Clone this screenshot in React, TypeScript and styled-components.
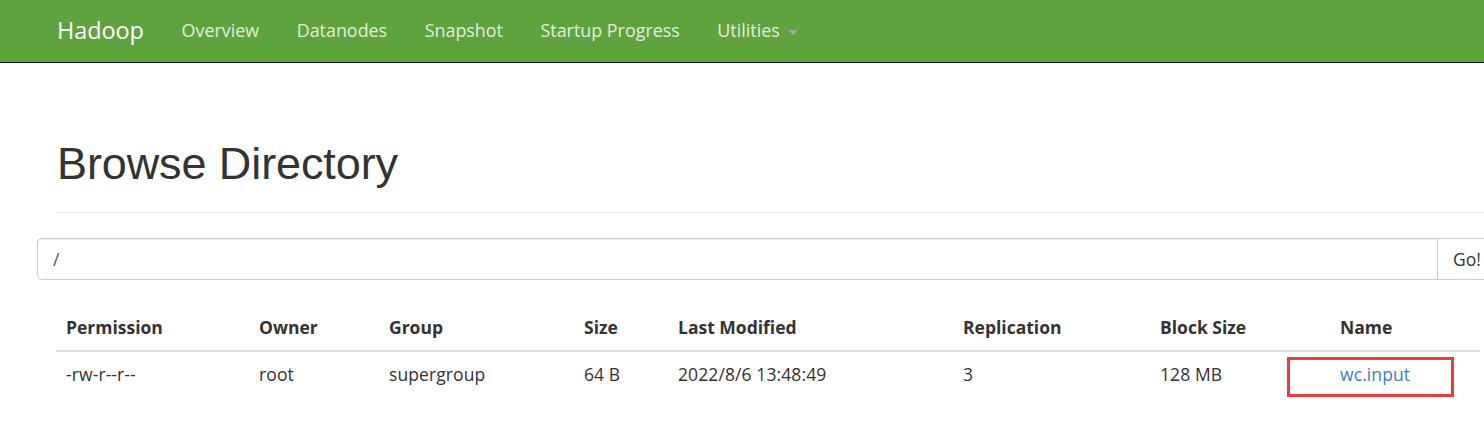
import React from 'react';
import styled, { createGlobalStyle } from 'styled-components';

const GlobalStyle = createGlobalStyle`
  html, body {
    margin: 0;
    padding: 0;
    background: #fff;
    overflow: hidden;
  }
  body {
    font-family: 'Open Sans', 'Noto Sans', sans-serif;
    font-size: 17.5px;
    line-height: 1.42857;
    color: #333;
  }
  * {
    box-sizing: border-box;
  }
`;

const Navbar = styled.nav`
  height: 63px;
  background: #5fa33e;
  border-bottom: 1px solid #111;
  display: flex;
  align-items: center;
  padding-left: 57px;
`;

const Brand = styled.a`
  color: #fff;
  font-size: 23.5px;
  text-decoration: none;
  margin-right: 19px;
  letter-spacing: -0.1px;
`;

const NavList = styled.ul`
  list-style: none;
  display: flex;
  margin: 0;
  padding: 0;
`;

const NavItem = styled.li`
  padding: 0 18.75px;
  color: #e4ecdf;
  font-size: 17.9px;
  display: flex;
  align-items: center;
`;

const Caret = styled.span`
  display: inline-block;
  width: 0;
  height: 0;
  margin-left: 8px;
  margin-top: 3px;
  border-top: 5px solid #a3a3a3;
  border-left: 5px solid transparent;
  border-right: 5px solid transparent;
`;

const Main = styled.main`
  width: 1560px;
  padding-left: 37px;
`;

const PageHeader = styled.div`
  margin: 76px 0 25px 20px;
  padding-bottom: 11px;
  border-bottom: 1px solid #eee;
`;

const Title = styled.h1`
  margin: 0 0 12.5px;
  font-family: 'Liberation Sans', Arial, sans-serif;
  font-size: 45px;
  font-weight: 400;
  line-height: 1.1;
  color: #333;
  letter-spacing: -0.1px;
`;

const InputGroup = styled.form`
  display: flex;
  height: 42px;
  margin: 0;
`;

const PathInput = styled.input`
  width: 1400px;
  height: 42px;
  padding: 0 15px;
  border: 1px solid #ccc;
  border-right: none;
  border-radius: 5px 0 0 5px;
  font-family: inherit;
  font-size: 17.5px;
  color: #555;
  box-shadow: inset 0 1px 1px rgba(0, 0, 0, 0.075);
  outline: none;
`;

const GoButton = styled.button`
  height: 42px;
  padding: 0 15px;
  border: 1px solid #ccc;
  border-radius: 0 5px 5px 0;
  background: #fff;
  font-family: inherit;
  font-size: 17.5px;
  color: #333;
`;

const Table = styled.table`
  margin: 25px 0 0 19px;
  border-collapse: collapse;
  table-layout: fixed;
  width: 1424px;
`;

const Col = styled.col<{ $w: number }>`
  width: ${p => p.$w}px;
`;

const HeadCell = styled.th`
  text-align: left;
  padding: 10px;
  line-height: 25px;
  font-weight: 700;
  border-bottom: 2.5px solid #ddd;
`;

const Cell = styled.td`
  padding: 10px;
  line-height: 25px;
  position: relative;
  letter-spacing: 0.1px;
`;

const FileLink = styled.a`
  color: #3a80c4;
  text-decoration: none;
`;

const Highlight = styled.span`
  position: absolute;
  left: -43px;
  top: 5px;
  width: 167px;
  height: 40px;
  border: 3px solid #ef3b3b;
  pointer-events: none;
`;

const columns = [
  { title: 'Permission', w: 193 },
  { title: 'Owner', w: 130 },
  { title: 'Group', w: 195 },
  { title: 'Size', w: 94 },
  { title: 'Last Modified', w: 285 },
  { title: 'Replication', w: 197 },
  { title: 'Block Size', w: 180 },
  { title: 'Name', w: 150 },
];

const files = [
  {
    permission: '-rw-r--r--',
    owner: 'root',
    group: 'supergroup',
    size: '64 B',
    modified: '2022/8/6 13:48:49',
    replication: '3',
    blockSize: '128 MB',
    name: 'wc.input',
  },
];

const App: React.FC = () => {
  return (
    <>
      <GlobalStyle />
      <Navbar>
        <Brand href="#">Hadoop</Brand>
        <NavList>
          <NavItem>Overview</NavItem>
          <NavItem>Datanodes</NavItem>
          <NavItem>Snapshot</NavItem>
          <NavItem>Startup Progress</NavItem>
          <NavItem>
            Utilities
            <Caret />
          </NavItem>
        </NavList>
      </Navbar>
      <Main>
        <PageHeader>
          <Title>Browse Directory</Title>
        </PageHeader>
        <InputGroup onSubmit={e => e.preventDefault()}>
          <PathInput defaultValue="/" />
          <GoButton type="submit">Go!</GoButton>
        </InputGroup>
        <Table>
          <colgroup>
            {columns.map(c => (
              <Col key={c.title} $w={c.w} />
            ))}
          </colgroup>
          <thead>
            <tr>
              {columns.map(c => (
                <HeadCell key={c.title}>{c.title}</HeadCell>
              ))}
            </tr>
          </thead>
          <tbody>
            {files.map(f => (
              <tr key={f.name}>
                <Cell>{f.permission}</Cell>
                <Cell>{f.owner}</Cell>
                <Cell>{f.group}</Cell>
                <Cell>{f.size}</Cell>
                <Cell>{f.modified}</Cell>
                <Cell>{f.replication}</Cell>
                <Cell>{f.blockSize}</Cell>
                <Cell>
                  <FileLink href="#">{f.name}</FileLink>
                  <Highlight />
                </Cell>
              </tr>
            ))}
          </tbody>
        </Table>
      </Main>
    </>
  );
};

export default App;
